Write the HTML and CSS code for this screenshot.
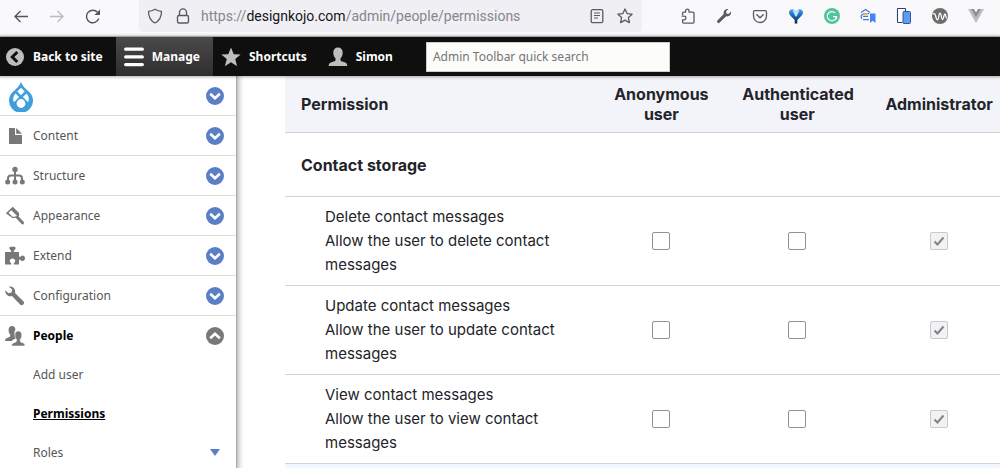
FILE: index.html
```
<!DOCTYPE html>
<html lang="en">
<head>
  <meta charset="UTF-8" />
  <meta name="viewport" content="width=device-width, initial-scale=1.0"/>
  <title>Permissions | Design Kojo</title>
  <link rel="stylesheet" href="styles.css">
</head>
<body>

  <!-- shared icons -->
  <svg class="sprite" aria-hidden="true">
    <symbol id="chevron" viewBox="0 0 18 18">
      <circle cx="9" cy="9" r="9" fill="currentColor"/>
      <path d="M4.200 6.800 9 11.300l4.800-4.500" fill="none" stroke="#fff" stroke-width="2.600"/>
    </symbol>
  </svg>

  <!-- BROWSER BAR -->
  <div class="browser">
    <div class="browser-group">
      <button class="browser-btn" aria-label="Back">
        <svg width="16" height="16" viewBox="0 0 16 16"><path d="M15 8.500H2M7.500 3 2 8.500 7.500 14" fill="none" stroke="#55545f" stroke-width="1.400"/></svg>
      </button>
      <button class="browser-btn" aria-label="Forward" disabled>
        <svg width="16" height="16" viewBox="0 0 16 16"><path d="M1 8.500h13M8.500 3 14 8.500 8.500 14" fill="none" stroke="#bdbcc3" stroke-width="1.400"/></svg>
      </button>
      <button class="browser-btn" aria-label="Reload">
        <svg width="16" height="16" viewBox="0 0 16 16"><path d="M13.800 10.600A6.300 6.300 0 1 1 12.400 4.100" fill="none" stroke="#55545f" stroke-width="1.400"/><path d="M15 1.500v5.600H9.400z" fill="#55545f"/></svg>
      </button>
    </div>

    <div class="address">
      <svg width="16" height="16" viewBox="0 0 16 16"><path d="M8 1.200c2 1.300 4 2 6.500 2.200C14.500 9 12.500 12.600 8 15 3.500 12.600 1.500 9 1.500 3.400 4 3.200 6 2.500 8 1.200z" fill="none" stroke="#5b5a64" stroke-width="1.300" stroke-linejoin="round"/></svg>
      <svg width="16" height="16" viewBox="0 0 16 16"><path d="M4.500 7.500V4.400a3.500 3.500 0 0 1 7 0v3.100" fill="none" stroke="#5b5a64" stroke-width="1.400"/><rect x="2.500" y="7.500" width="11" height="7.500" rx="1.500" fill="none" stroke="#5b5a64" stroke-width="1.400"/></svg>
      <div class="url" role="textbox" aria-label="Address" contenteditable="true" spellcheck="false">https://<span class="url-host">designkojo.com</span>/admin/people/permissions</div>
      <button class="address-btn" aria-label="Reader view">
        <svg width="16" height="16" viewBox="0 0 16 16"><rect x="2.200" y="1.700" width="11.600" height="13" rx="1.500" fill="none" stroke="#5b5a64" stroke-width="1.300"/><path d="M5 5h6M5 7.500h6M5 10h4" stroke="#5b5a64" stroke-width="1.200"/></svg>
      </button>
      <button class="address-btn" aria-label="Bookmark this page">
        <svg width="16" height="16" viewBox="0 0 16 16"><path d="m8 1 2.100 4.600 5 .6-3.700 3.400 1 5L8 12.100l-4.400 2.500 1-5L.9 6.200l5-.6z" fill="none" stroke="#5b5a64" stroke-width="1.300" stroke-linejoin="round"/></svg>
      </button>
    </div>

    <div class="browser-group">
      <button class="browser-btn" aria-label="Extensions">
        <svg width="16" height="16" viewBox="0 0 16 16"><path d="M2.600 7V5.100c0-.6.4-1 1-1h2V2.800a1.700 1.700 0 0 1 3.400 0v1.300h4c.6 0 1 .4 1 1v9c0 .6-.4 1-1 1H3.600c-.6 0-1-.4-1-1v-2.300h1.500a1.800 1.800 0 0 0 0-3.600H1.600" fill="none" stroke="#5b5a64" stroke-width="1.300" stroke-linejoin="round"/></svg>
      </button>
      <button class="browser-btn" aria-label="Developer tools">
        <svg width="16" height="16" viewBox="0 0 16 16"><path d="M12.400 1 10 3.400l.5 2.100 2.100.5L15 3.600c.6 3-1.800 5.400-4.800 4.700L3.700 14.600a1.500 1.500 0 0 1-2.200-2.200L7.700 6C7 3 9.400.4 12.400 1z" fill="#5b5a64"/></svg>
      </button>
      <button class="browser-btn" aria-label="Save to Pocket">
        <svg width="16" height="16" viewBox="0 0 16 16"><path d="M2.700 2.700h10.600c.7 0 1.200.5 1.200 1.200V8a6.500 6.500 0 0 1-13 0V3.900c0-.7.500-1.200 1.200-1.200z" fill="none" stroke="#5b5a64" stroke-width="1.300"/><path d="m4.800 6.800 3.200 3 3.200-3" fill="none" stroke="#5b5a64" stroke-width="1.400" stroke-linecap="round"/></svg>
      </button>
      <button class="browser-btn" aria-label="Filter">
        <svg width="16" height="16" viewBox="0 0 16 16">
          <defs>
            <linearGradient id="blue" x2="0" y2="1"><stop offset="0" stop-color="#4aa3ec"/><stop offset=".45" stop-color="#1b66b8"/><stop offset="1" stop-color="#0a1f3f"/></linearGradient>
          </defs>
          <path d="M1 4C1.500 1.800 3.200.9 5 1.200L8 3.500l3-2.300c1.800-.3 3.500.6 4 2.800.2 1.800-1.500 4-3.800 6L9.300 12v3.600H6.700V12L4.800 10C2.500 8 .8 5.800 1 4z" fill="url(#blue)"/>
          <path d="M4.500 2.200h7L8.600 8.500H7.400z" fill="#b9e2ff"/>
        </svg>
      </button>
      <button class="browser-btn" aria-label="Writing assistant">
        <svg width="16" height="16" viewBox="0 0 16 16"><circle cx="8" cy="8" r="8" fill="#55c39b"/><path d="M11.200 4.900A4.600 4.600 0 1 0 12.500 8.700H9M12.500 8.700v2.600" fill="none" stroke="#fff" stroke-width="1.200"/></svg>
      </button>
      <button class="browser-btn" aria-label="Scholar">
        <svg width="16" height="16" viewBox="0 0 16 16"><path d="M1 4.600 5.500 1.500 10 4.600M2 10.800C0 8 2 5.700 5 5.700h4M3 8.300h5M3 11.600h6" fill="none" stroke="#4b76cf" stroke-width="1.200"/><path d="M3 5.800h5" stroke="#e6b04d" stroke-width="1.400"/><path d="M10 5.500h5.500V15l-2.750-2.300L10 15z" fill="#4285f4"/></svg>
      </button>
      <button class="browser-btn" aria-label="Responsive view">
        <svg width="16" height="16" viewBox="0 0 16 16"><path d="M9.500 3V1.200a.7.700 0 0 0-.7-.7H2.200a.7.700 0 0 0-.7.7v12.600c0 .4.300.7.700.7h4.300" fill="#fff" stroke="#27436f" stroke-width="1.100"/><rect x="7" y="3.500" width="7.500" height="12" rx="1" fill="#5d9cf5" stroke="#315795"/></svg>
      </button>
      <button class="browser-btn" aria-label="Wave">
        <svg width="16" height="16" viewBox="0 0 16 16"><circle cx="8" cy="8" r="8" fill="#6d6d6d"/><path d="M.5 6c2-.8 2.500-.4 3 1.500.6 2.500 1.200 4.500 2.200 4.300C7 11.500 6.600 5.200 8 5.200s1.300 6.300 2.500 6.300S11.800 6 13 6c1 0 .8 4.500 1.800 4.500" fill="none" stroke="#fff" stroke-width="1.300"/></svg>
      </button>
      <button class="browser-btn" aria-label="Vue devtools">
        <svg width="16" height="16" viewBox="0 0 16 16"><path d="M0 1h16L8 15z" fill="#bdbdbd"/><path d="M3.200 1h9.600L8 9.300z" fill="#8e8e8e"/><path d="M6 1h4L8 4.400z" fill="#f9f9fb"/></svg>
      </button>
    </div>
  </div>

  <!-- ADMIN TOOLBAR -->
  <nav class="toolbar">
    <a href="#" class="tab tab-back">
      <svg width="20" height="20" viewBox="0 0 20 20"><circle cx="10" cy="10" r="9" fill="#bebebe"/><path d="M12.300 5 7.300 10l5 5" fill="none" stroke="#0f0f0f" stroke-width="3"/></svg>
      Back to site
    </a>
    <a href="#" class="tab tab-active">
      <svg width="20" height="20" viewBox="0 0 20 20"><path d="M1.700 2.200h16.600M1.700 9.900h16.600M1.700 17.600h16.600" stroke="#fff" stroke-width="3.300" stroke-linecap="round"/></svg>
      Manage
    </a>
    <a href="#" class="tab">
      <svg width="20" height="20" viewBox="0 0 20 20"><path d="m10 .5 2.700 6.700 7 .4-5.500 4.500 1.900 7.200L10 15.200l-6.100 4.100 1.900-7.200L.3 7.600l7-.4z" fill="#bebebe"/></svg>
      Shortcuts
    </a>
    <a href="#" class="tab">
      <svg width="20" height="20" viewBox="0 0 20 20"><path d="M10 .5c3 0 4.700 2 4.700 5 0 2.600-.9 4.700-2.200 5.800v1.700c0 1 1 1.400 3.200 2.100 2.400.8 3.600 1.500 3.600 3.900H.7c0-2.400 1.200-3.100 3.600-3.900 2.200-.7 3.200-1.100 3.200-2.100v-1.700C6.200 10.200 5.300 8.100 5.300 5.500c0-3 1.700-5 4.700-5z" fill="#bebebe"/></svg>
      Simon
    </a>
    <input class="search" type="text" aria-label="Admin Toolbar quick search" placeholder="Admin Toolbar quick search">
  </nav>

  <div class="page">

    <!-- SIDE MENU -->
    <aside class="sidebar">
      <ul class="menu">
        <li class="menu-item">
          <a href="#" class="menu-link" aria-label="Tools">
            <svg class="drop" width="26" height="32" viewBox="0 0 26 32"><path d="M13 1.200c.6 3.900 4 6.800 7.100 9.900a12 12 0 1 1-14.200 0C9 8 12.400 5.100 13 1.200z" fill="#3f9fdb"/><path d="M13 7.700 9.300 11.500l3.700 3.700 3.700-3.700zM7.500 13.400c-2.400 2.500-3 6-1.600 8.800L11.100 17zM18.500 13.400 14.900 17l5.200 5.200c1.400-2.800.8-6.300-1.600-8.800z" fill="#fff"/><circle cx="13" cy="23.500" r="4.400" fill="#fff"/></svg>
          </a>
          <button class="toggle" aria-label="Open Tools"><svg width="18" height="18"><use href="#chevron"/></svg></button>
        </li>
        <li class="menu-item">
          <a href="#" class="menu-link">
            <svg width="20" height="20" viewBox="0 0 20 20"><path d="M4 2h6v7h7v9H4z" fill="#787878"/><path d="M11.200 2v5.800H17z" fill="#787878"/></svg>
            Content
          </a>
          <button class="toggle" aria-label="Open Content"><svg width="18" height="18"><use href="#chevron"/></svg></button>
        </li>
        <li class="menu-item">
          <a href="#" class="menu-link">
            <svg width="20" height="20" viewBox="0 0 20 20"><path d="M10 4v12M3 15v-2.500c0-2 1-3 3-3h8c2 0 3 1 3 3V15" fill="none" stroke="#787878" stroke-width="2"/><g fill="#787878"><circle cx="10" cy="3.500" r="2.700"/><circle cx="2.700" cy="16" r="2.500"/><circle cx="10" cy="16" r="2.500"/><circle cx="17.300" cy="16" r="2.500"/></g></svg>
            Structure
          </a>
          <button class="toggle" aria-label="Open Structure"><svg width="18" height="18"><use href="#chevron"/></svg></button>
        </li>
        <li class="menu-item">
          <a href="#" class="menu-link">
            <svg width="20" height="20" viewBox="0 0 20 20"><path d="M7.800.8 14 7c.4 1.600.2 3-.8 4-1.500.8-3.500.7-5.400 1.300L.8 7.300z" fill="#787878"/><path d="m6.300 4.300 5.800 5.800-4.300.9-4.300-4.200z" fill="#fff"/><path d="m12.500 11.500 5 5.300" stroke="#787878" stroke-width="3" stroke-linecap="round"/></svg>
            Appearance
          </a>
          <button class="toggle" aria-label="Open Appearance"><svg width="18" height="18"><use href="#chevron"/></svg></button>
        </li>
        <li class="menu-item">
          <a href="#" class="menu-link">
            <svg width="20" height="20" viewBox="0 0 20 20"><path d="M0 6h5.500c1.600-.3.700-1.400-.3-2.200-1.200-1-.9-3 .3-3h4c1.200 0 1.500 2 .3 3-1 .8-1.900 1.900-.3 2.200H14v4c.3 1.500 1.100 1.200 2 .2 1.500-1.300 4-.5 4 2.100s-2.500 3.400-4 2.100c-.9-1-1.700-1.300-2 .2v4H9.500c-1.600-.3-.8-1.200.1-2.200 1.300-1.500.5-3.900-2.100-3.900s-3.400 2.400-2.100 3.900c.9 1 1.700 1.900.1 2.200H0z" fill="#787878"/></svg>
            Extend
          </a>
          <button class="toggle" aria-label="Open Extend"><svg width="18" height="18"><use href="#chevron"/></svg></button>
        </li>
        <li class="menu-item">
          <a href="#" class="menu-link">
            <svg width="20" height="20" viewBox="0 0 20 20"><path d="M4 .7C8 0 11 3.300 10 7l8.300 8.200a2.200 2.200 0 0 1-3.200 3.200L7 10C3.300 11-.3 8 .4 4.200l3 3 3-.8.8-3z" fill="#787878"/></svg>
            Configuration
          </a>
          <button class="toggle" aria-label="Open Configuration"><svg width="18" height="18"><use href="#chevron"/></svg></button>
        </li>
        <li class="menu-item menu-open">
          <a href="#" class="menu-link">
            <svg width="20" height="20" viewBox="0 0 20 20"><path d="M7 0c2.200 0 3.400 1.500 3.400 3.800-1 1.400-1.300 3.800-.3 6.200.3 1 .9 1.800.8 2.400-1.900.8-3.500 1-4.100 2.600H0c0-2 .9-2.700 2.800-3.300 1.600-.5 2.400-.9 2.400-1.700V8.500C4.200 7.600 3.600 6.100 3.600 4 3.600 1.500 4.800 0 7 0z" fill="#787878"/><path d="M13.300 5c2.200 0 3.500 1.500 3.500 4 0 2-.7 3.500-1.600 4.500V15c0 .8.800 1.200 2.400 1.700 1.800.6 2.400 1.300 2.400 3.300H6.600c0-2 .7-2.700 2.500-3.300 1.600-.5 2.400-.9 2.400-1.700v-1.500c-1-1-1.600-2.500-1.600-4.500 0-2.500 1.200-4 3.400-4z" fill="#787878" stroke="#fff" stroke-width=".6"/></svg>
            People
          </a>
          <button class="toggle toggle-open" aria-label="Close People"><svg width="18" height="18"><use href="#chevron"/></svg></button>
        </li>
      </ul>
      <ul class="submenu">
        <li class="submenu-item"><a href="#">Add user</a></li>
        <li class="submenu-item"><a href="#" class="current">Permissions</a></li>
        <li class="submenu-item">
          <a href="#">Roles</a>
          <button class="toggle" aria-label="Open Roles"><svg width="10" height="7" viewBox="0 0 10 7"><path d="M0 0h10L5 7z" fill="currentColor"/></svg></button>
        </li>
      </ul>
    </aside>

    <!-- PERMISSIONS -->
    <main class="content">
      <table class="permissions">
        <thead>
          <tr>
            <th class="col-name">Permission</th>
            <th>Anonymous user</th>
            <th>Authenticated user</th>
            <th>Administrator</th>
          </tr>
        </thead>
        <tbody>
          <tr class="module">
            <td colspan="4">Contact storage</td>
          </tr>
          <tr>
            <td class="name">Delete contact messages<div>Allow the user to delete contact messages</div></td>
            <td><input type="checkbox" aria-label="Anonymous user: Delete contact messages"></td>
            <td><input type="checkbox" aria-label="Authenticated user: Delete contact messages"></td>
            <td><input type="checkbox" aria-label="Administrator: Delete contact messages" checked disabled></td>
          </tr>
          <tr>
            <td class="name">Update contact messages<div>Allow the user to update contact messages</div></td>
            <td><input type="checkbox" aria-label="Anonymous user: Update contact messages"></td>
            <td><input type="checkbox" aria-label="Authenticated user: Update contact messages"></td>
            <td><input type="checkbox" aria-label="Administrator: Update contact messages" checked disabled></td>
          </tr>
          <tr>
            <td class="name">View contact messages<div>Allow the user to view contact messages</div></td>
            <td><input type="checkbox" aria-label="Anonymous user: View contact messages"></td>
            <td><input type="checkbox" aria-label="Authenticated user: View contact messages"></td>
            <td><input type="checkbox" aria-label="Administrator: View contact messages" checked disabled></td>
          </tr>
        </tbody>
      </table>
    </main>
  </div>

</body>
</html>
```

FILE: styles.css
```
* {
  box-sizing: border-box;
}

body {
  display: flex;
  flex-direction: column;
  height: 100vh;
  margin: 0;
  overflow: hidden;
  font-family: Inter, sans-serif;
  font-size: 16px;
  color: #232429;
  background: #fff;
}

button {
  padding: 0;
  border: none;
  background: none;
}

svg {
  flex: none;
}

ul {
  margin: 0;
  padding: 0;
  list-style: none;
}

.sprite {
  position: absolute;
  width: 0;
  height: 0;
}

/* browser bar */
.browser {
  display: flex;
  flex: none;
  gap: 28px;
  padding: 0 6px 4px 3px;
  background: #f9f9fb;
  border-bottom: 1px solid #ccccd1;
}

.browser-group {
  display: flex;
}

.browser-btn {
  display: flex;
  align-items: center;
  justify-content: center;
  width: 36px;
  height: 32px;
}

.address {
  display: flex;
  flex: 1;
  align-items: center;
  gap: 12px;
  min-width: 0;
  padding: 0 9px 0 8px;
  background: #f0f0f4;
  border-radius: 0 0 4px 4px;
}

.url {
  flex: 1;
  overflow: hidden;
  margin-left: -2px;
  font-family: Roboto, sans-serif;
  font-size: 14px;
  line-height: 20px;
  white-space: nowrap;
  color: #85858c;
}

.url-host {
  color: #15141a;
}

.address-btn {
  display: flex;
}

/* admin toolbar */
.toolbar {
  position: relative;
  z-index: 2;
  display: flex;
  flex: none;
  height: 39px;
  font-family: "Noto Sans", sans-serif;
  font-size: 12px;
  background: #0f0f0f;
  box-shadow: 0 0 3px 1px rgba(0, 0, 0, 0.33);
}

.tab {
  display: flex;
  align-items: center;
  gap: 8px;
  padding: 0 13px 0 8px;
  font-weight: bold;
  color: #fff;
  text-decoration: none;
}

.tab-back {
  padding-left: 5px;
}

.tab-active {
  background: linear-gradient(#4a4a4a, #2e2e2e);
}

.search {
  align-self: center;
  width: 244px;
  height: 30px;
  margin-left: 20px;
  padding: 0 6px;
  border: 1px solid #ccc;
  font: inherit;
  background: #fcfcfa;
}

.search::placeholder {
  color: #757575;
}

/* side menu */
.page {
  display: flex;
  flex: 1;
  min-height: 0;
  overflow: hidden;
}

.sidebar {
  position: relative;
  z-index: 1;
  flex: none;
  width: 237px;
  font-family: "Noto Sans", sans-serif;
  font-size: 12px;
  background: #fff;
  border-right: 1px solid #aaa;
  box-shadow: 0 0 5px 2px rgba(0, 0, 0, 0.3);
}

.menu-item {
  display: flex;
  align-items: center;
  height: 40px;
  padding: 0 12px 0 5px;
  border-bottom: 1px solid #ddd;
}

.menu-link {
  display: flex;
  flex: 1;
  align-items: center;
  gap: 8px;
  color: #565656;
  text-decoration: none;
}

.drop {
  margin-left: 3px;
}

.menu-open {
  height: 39px;
  border-bottom: none;
}

.menu-open .menu-link {
  font-weight: bold;
  color: #000;
}

.toggle {
  display: flex;
  justify-content: center;
  width: 18px;
  color: #5b7fc5;
}

.toggle-open {
  color: #787878;
  transform: rotate(180deg);
}

.submenu-item {
  display: flex;
  align-items: center;
  justify-content: space-between;
  height: 39px;
  padding: 0 12px 0 33px;
}

.submenu-item a {
  color: #565656;
  text-decoration: none;
}

.submenu-item .current {
  font-weight: bold;
  color: #000;
  text-decoration: underline;
}

/* permissions table */
.content {
  flex: 1;
  display: flex;
  flex-direction: column;
  margin-left: 48px;
  background: #f3f7ff;
}

.permissions {
  width: 100%;
  table-layout: fixed;
  border-collapse: separate;
  border-spacing: 0;
  background: #fff;
}

.permissions th {
  width: 19%;
  height: 57px;
  padding: 0 12px 0 14px;
  line-height: 20px;
  background: #f3f4f9;
  border-bottom: 1px solid #d3d4d9;
}

.permissions .col-name {
  width: 43%;
  padding: 0 16px;
  text-align: left;
}

.permissions th:last-child,
.permissions td:last-child {
  padding-right: 0;
}

.permissions td {
  height: 89px;
  padding: 0 12px 0 14px;
  font-size: 15px;
  line-height: 24px;
  text-align: center;
  border-bottom: 1px solid #d3d4d9;
}

.permissions .module td {
  height: 64px;
  padding: 0 16px;
  font-size: 16px;
  font-weight: bold;
  text-align: left;
}

.permissions .name {
  padding: 8px 32px 8px 40px;
  text-align: left;
}

.permissions input {
  display: block;
  width: 18px;
  height: 18px;
  margin: 0 auto;
  appearance: none;
  border: 1px solid #8e929c;
  border-radius: 2px;
  background: #fff;
}

.permissions input:disabled {
  border-color: #c8c9cc;
  background: #f2f2f3 url("data:image/svg+xml,%3Csvg xmlns='http://www.w3.org/2000/svg' viewBox='0 0 16 16'%3E%3Cpath d='M3.500 8.500l3 3 6-7' fill='none' stroke='%2382828c' stroke-width='2'/%3E%3C/svg%3E") center no-repeat;
}
```
